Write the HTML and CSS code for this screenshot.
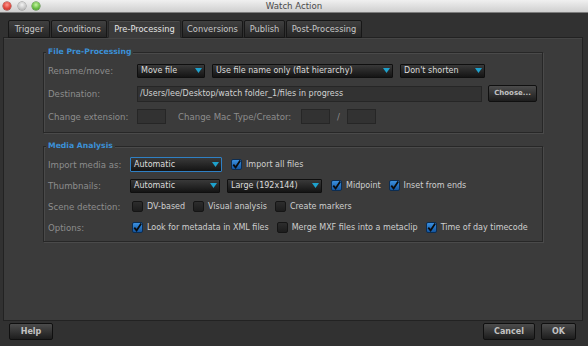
FILE: index.html
```html
<!DOCTYPE html>
<html>
<head>
<meta charset="utf-8">
<link rel="stylesheet" href="styles.css">
</head>
<body>
<div class="titlebar">
  <div class="lights"><span class="light red"></span><span class="light min"></span><span class="light max"></span></div>
  <div class="title">Watch Action</div>
  <div></div>
</div>
<div class="tabs">
  <div class="tab w-trigger">Trigger</div>
  <div class="tab w-cond">Conditions</div>
  <div class="tab w-pre active">Pre-Processing</div>
  <div class="tab w-conv">Conversions</div>
  <div class="tab w-pub">Publish</div>
  <div class="tab w-post">Post-Processing</div>
</div>
<div class="panel">
  <div class="group g1">
    <div class="group-title">File Pre-Processing</div>
    <div class="rows">
      <div class="row">
        <span class="label">Rename/move:</span>
        <div class="ctrls gap7">
          <div class="select w-move"><span>Move file</span><svg class="arrow" width="7" height="5" viewBox="0 0 7 5"><path d="M0 0H7L3.5 5Z"/></svg></div>
          <div class="select w-use"><span>Use file name only (flat hierarchy)</span><svg class="arrow" width="7" height="5" viewBox="0 0 7 5"><path d="M0 0H7L3.5 5Z"/></svg></div>
          <div class="select w-dont"><span>Don't shorten</span><svg class="arrow" width="7" height="5" viewBox="0 0 7 5"><path d="M0 0H7L3.5 5Z"/></svg></div>
        </div>
      </div>
      <div class="row">
        <span class="label">Destination:</span>
        <div class="ctrls gap6">
          <div class="input w-dest">/Users/lee/Desktop/watch folder_1/files in progress</div>
          <div class="btn w-choose">Choose...</div>
        </div>
      </div>
      <div class="row">
        <span class="label">Change extension:</span>
        <div class="ctrls">
          <div class="input small"></div>
          <span class="label mac">Change Mac Type/Creator:</span>
          <div class="input small"></div>
          <span class="slash">/</span>
          <div class="input small"></div>
        </div>
      </div>
    </div>
  </div>
  <div class="group g2">
    <div class="group-title">Media Analysis</div>
    <div class="rows">
      <div class="row">
        <span class="label">Import media as:</span>
        <div class="ctrls">
          <div class="select focus w-import"><span>Automatic</span><svg class="arrow" width="7" height="5" viewBox="0 0 7 5"><path d="M0 0H7L3.5 5Z"/></svg></div>
          <label class="cb first"><span class="check on"><svg width="11" height="11" viewBox="0 0 11 11"><path d="M2.3 5.6L4.6 8.4L9.2 1.4"/></svg></span>Import all files</label>
        </div>
      </div>
      <div class="row">
        <span class="label">Thumbnails:</span>
        <div class="ctrls">
          <div class="select w-thumb"><span>Automatic</span><svg class="arrow" width="7" height="5" viewBox="0 0 7 5"><path d="M0 0H7L3.5 5Z"/></svg></div>
          <div class="select w-large"><span>Large (192x144)</span><svg class="arrow" width="7" height="5" viewBox="0 0 7 5"><path d="M0 0H7L3.5 5Z"/></svg></div>
          <label class="cb first"><span class="check on"><svg width="11" height="11" viewBox="0 0 11 11"><path d="M2.3 5.6L4.6 8.4L9.2 1.4"/></svg></span>Midpoint</label>
          <label class="cb"><span class="check on"><svg width="11" height="11" viewBox="0 0 11 11"><path d="M2.3 5.6L4.6 8.4L9.2 1.4"/></svg></span>Inset from ends</label>
        </div>
      </div>
      <div class="row">
        <span class="label">Scene detection:</span>
        <div class="ctrls inset">
          <label class="cb"><span class="check"></span>DV-based</label>
          <label class="cb"><span class="check"></span>Visual analysis</label>
          <label class="cb"><span class="check"></span>Create markers</label>
        </div>
      </div>
      <div class="row">
        <span class="label">Options:</span>
        <div class="ctrls inset">
          <label class="cb"><span class="check on"><svg width="11" height="11" viewBox="0 0 11 11"><path d="M2.3 5.6L4.6 8.4L9.2 1.4"/></svg></span>Look for metadata in XML files</label>
          <label class="cb"><span class="check"></span>Merge MXF files into a metaclip</label>
          <label class="cb"><span class="check on"><svg width="11" height="11" viewBox="0 0 11 11"><path d="M2.3 5.6L4.6 8.4L9.2 1.4"/></svg></span>Time of day timecode</label>
        </div>
      </div>
    </div>
  </div>
</div>
<div class="footer">
  <div class="btn w-help">Help</div>
  <div class="spacer"></div>
  <div class="btn w-cancel">Cancel</div>
  <div class="btn w-ok">OK</div>
</div>
</body>
</html>
```
FILE: styles.css
```css
html, body {
  margin: 0;
  padding: 0;
}
body {
  width: 588px;
  height: 346px;
  overflow: hidden;
  background: #313131;
  font-family: "DejaVu Sans", "Liberation Sans", sans-serif;
}

/* title bar */
.titlebar {
  height: 12px;
  border-bottom: 1px solid #7c7c7c;
  background: linear-gradient(#f0f0f0, #cfcfcf);
  display: grid;
  grid-template-columns: 1fr auto 1fr;
  align-items: center;
}
.lights {
  display: flex;
  gap: 6.5px;
  padding-left: 3px;
}
.light {
  width: 8px;
  height: 8px;
  border-radius: 50%;
}
.red {
  background: radial-gradient(circle at 50% 35%, #ff9a90 0, #e0463c 55%, #b7281f 100%);
  box-shadow: 0 0 0 0.5px #8e2a22;
}
.min {
  background: radial-gradient(circle at 50% 35%, #f4f4f4 0, #c4c4c4 60%, #9e9e9e 100%);
  box-shadow: 0 0 0 0.5px #8a8a8a;
}
.max {
  background: radial-gradient(circle at 50% 35%, #c8f5a4 0, #6cbf46 55%, #3c8d22 100%);
  box-shadow: 0 0 0 0.5px #3f7a2b;
}
.title {
  font-size: 8.6px;
  line-height: 12px;
  color: #4a4a4a;
}

/* tabs */
.tabs {
  display: flex;
  gap: 1px;
  margin: 7px 0 -1px 8px;
}
.tab {
  box-sizing: border-box;
  height: 18px;
  border: 1px solid #171717;
  border-radius: 2px 2px 0 0;
  background: linear-gradient(#404040, #262626);
  color: #c8c8c8;
  font-size: 8.3px;
  line-height: 16px;
  text-align: center;
  white-space: nowrap;
}
.tab.active {
  position: relative;
  z-index: 1;
  background: #3b3b3b;
  border-bottom-color: #3b3b3b;
  border-color: #262626 #262626 #3b3b3b;
  color: #e4e4e4;
  box-shadow: inset 0 1px 0 #4a4a4a;
}
.w-trigger { width: 42px; }
.w-cond { width: 56px; }
.w-pre { width: 73px; }
.w-conv { width: 61px; }
.w-pub { width: 41px; }
.w-post { width: 76px; }

/* panel */
.panel {
  box-sizing: border-box;
  margin-left: 3px;
  width: 580px;
  height: 284px;
  background: #3b3b3b;
  border: 1px solid #222222;
  box-shadow: inset 0 1px 0 #464646;
  padding: 14px 39px 0;
}
.group {
  border: 1px solid #272727;
  box-shadow: 1px 1px 0 #4a4a4a, inset 1px 1px 0 #4a4a4a;
}
.g2 {
  margin-top: 13px;
}
.group-title {
  width: fit-content;
  margin: -6px 0 0 2px;
  padding: 0 2px;
  background: #3b3b3b;
  color: #3b91d8;
  font-weight: bold;
  font-size: 7.7px;
  line-height: 10px;
}
.g1 .rows {
  padding: 2px 4px 4px;
}
.g2 .rows {
  padding: 3px 4px 3px;
}
.row {
  display: flex;
  align-items: center;
  height: 23px;
}
.g2 .row {
  height: 21px;
}
.label {
  flex: none;
  width: 89px;
  font-size: 8.6px;
  color: #8d8d8d;
  white-space: nowrap;
}
.g2 .label {
  width: 82px;
}
.ctrls {
  display: flex;
  align-items: center;
}
.gap7 { gap: 7px; }
.gap6 { gap: 6px; }
.ctrls.inset {
  padding-left: 2px;
}

/* select */
.select {
  box-sizing: border-box;
  height: 14px;
  border: 1px solid #0f0f0f;
  border-radius: 1px;
  background: linear-gradient(#393939, #141414);
  color: #dcdcdc;
  font-size: 8px;
  line-height: 12px;
  padding: 0 2px 0 3px;
  display: flex;
  justify-content: space-between;
  align-items: center;
  white-space: nowrap;
}
.select.focus {
  height: 15px;
  border-color: #2f80c4;
}
.arrow {
  flex: none;
  fill: #1ea1cc;
}
.w-move { width: 68px; }
.w-use { width: 181px; }
.w-dont { width: 85px; }
.w-import { width: 92px; }
.w-thumb { width: 90px; }
.w-large { width: 95px; margin-left: 7px; }

/* text inputs */
.input {
  box-sizing: border-box;
  height: 16px;
  background: #323232;
  border: 1px solid #262626;
  color: #d2d2d2;
  font-size: 8px;
  line-height: 14px;
  padding-left: 2px;
  white-space: nowrap;
}
.w-dest { width: 345px; }
.input.small {
  width: 29px;
  height: 15px;
}
.label.mac {
  width: 123px;
  margin-left: 12px;
}
.slash {
  width: 17px;
  text-align: center;
  font-size: 8.6px;
  color: #8d8d8d;
}

/* buttons */
.btn {
  box-sizing: border-box;
  height: 17px;
  border: 1px solid #101010;
  border-radius: 2px;
  background: linear-gradient(#4c4c4c, #1d1d1d);
  color: #c2c2c2;
  font-weight: bold;
  font-size: 8px;
  line-height: 15px;
  text-align: center;
  white-space: nowrap;
}
.w-choose { width: 49px; font-size: 7px; }
.w-help { width: 44px; }
.w-cancel { width: 52px; }
.w-ok { width: 35px; }

/* checkboxes */
.cb {
  display: flex;
  align-items: center;
  gap: 4px;
  margin-right: 8px;
  font-size: 8px;
  color: #cfcfcf;
  white-space: nowrap;
}
.cb.first {
  margin-left: 9px;
}
.check {
  flex: none;
  box-sizing: border-box;
  width: 11px;
  height: 11px;
  border: 1px solid #151515;
  border-radius: 2px;
  background: linear-gradient(#2d2d2d, #1d1d1d);
  display: flex;
}
.check.on {
  background: linear-gradient(#3b90e0, #1456a0);
  border-color: #0c2d52;
}
.check svg {
  margin: -1px;
  overflow: visible;
}
.check svg path {
  fill: none;
  stroke: #0c0c0c;
  stroke-width: 1.8;
}

/* footer */
.footer {
  display: flex;
  gap: 6px;
  padding: 2px 12px 0 9px;
}
.spacer {
  flex: 1;
}
```
